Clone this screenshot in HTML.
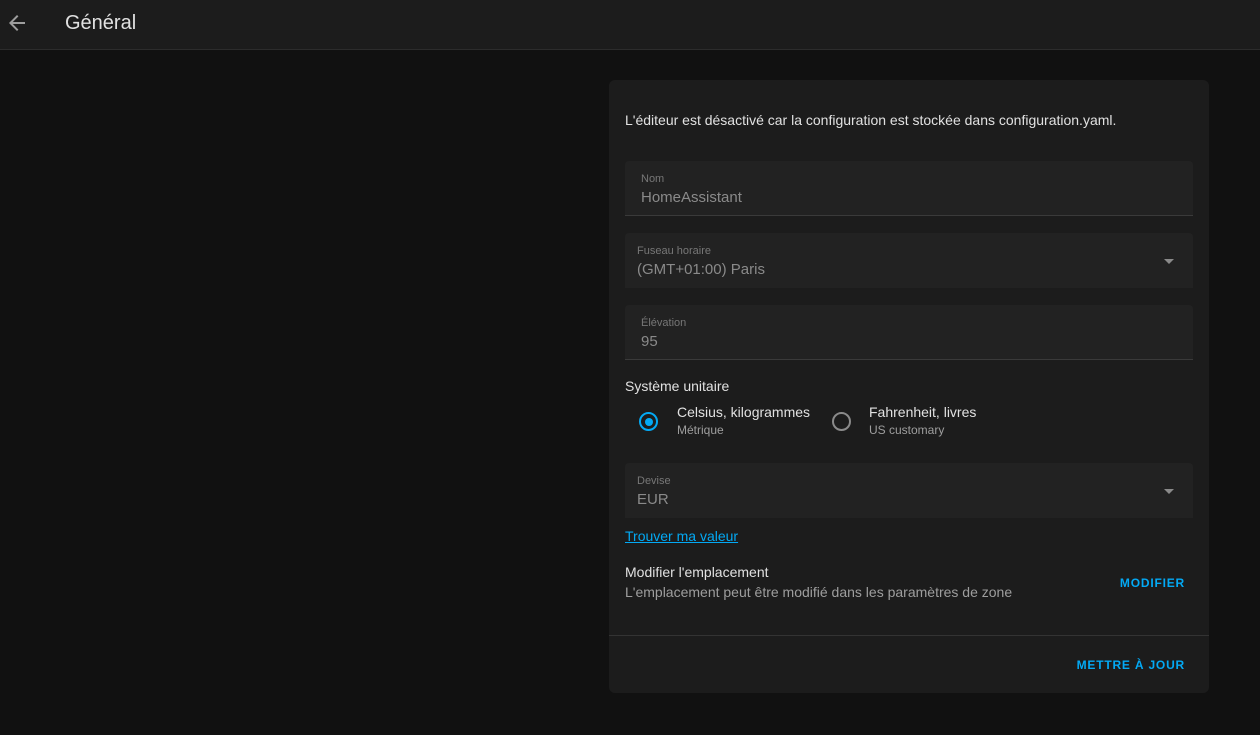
<!DOCTYPE html>
<html><head><meta charset="utf-8"><style>
*{box-sizing:border-box;margin:0;padding:0}
body{width:1260px;height:735px;background:#111111;font-family:"Liberation Sans",sans-serif;color:#e1e1e1;position:relative;overflow:hidden}
.hdr{position:absolute;left:0;top:0;width:1260px;height:50px;background:#1c1c1c;border-bottom:1px solid #2c2c2c}
.hdr .t{position:absolute;left:65px;top:12px;font-size:20px;color:#e1e1e1}
.card{position:absolute;left:609px;top:80px;width:600px;height:613px;background:#1c1c1c;border-radius:6px}
.a{position:absolute}
.fld{position:absolute;left:16px;width:568px;background:#222222;border-radius:4px 4px 0 0}
.lbl{position:absolute;font-size:11px;color:#777}
.val{position:absolute;font-size:15px;color:#8a8a8a}
.tri{position:absolute;right:19px;width:0;height:0;border-left:5px solid transparent;border-right:5px solid transparent;border-top:5px solid #8a8a8a}
.blue{color:#03a9f4}
</style></head><body>
<div class="hdr">
<svg style="position:absolute;left:5px;top:11px" width="24" height="24" viewBox="0 0 24 24"><path d="M20 11H7.83l5.59-5.59L12 4l-8 8 8 8 1.41-1.41L7.83 13H20v-2z" fill="#9e9e9e"/></svg>
<div class="t">Général</div>
</div>
<div class="card">
<div class="a" style="left:16px;top:32px;font-size:14px;color:#e1e1e1">L'éditeur est désactivé car la configuration est stockée dans configuration.yaml.</div>
<div class="fld" style="top:81px;height:55px;border-bottom:1px solid #3a3a3a">
 <div class="lbl" style="left:16px;top:12px">Nom</div><div class="val" style="left:16px;top:28px">HomeAssistant</div></div>
<div class="fld" style="top:153px;height:55px">
 <div class="lbl" style="left:12px;top:12px">Fuseau horaire</div><div class="val" style="left:12px;top:28px">(GMT+01:00) Paris</div><div class="tri" style="top:26px"></div></div>
<div class="fld" style="top:225px;height:55px;border-bottom:1px solid #3a3a3a">
 <div class="lbl" style="left:16px;top:12px">Élévation</div><div class="val" style="left:16px;top:28px">95</div></div>
<div class="a" style="left:16px;top:298px;font-size:14px">Système unitaire</div>
<div class="a" style="left:30px;top:332px;width:19px;height:19px;border:2px solid #03a9f4;border-radius:50%"><div style="position:absolute;left:3.5px;top:3.5px;width:8px;height:8px;border-radius:50%;background:#03a9f4"></div></div>
<div class="a" style="left:68px;top:324px;font-size:14px">Celsius, kilogrammes</div>
<div class="a" style="left:68px;top:343px;font-size:12px;color:#9e9e9e">Métrique</div>
<div class="a" style="left:223px;top:332px;width:19px;height:19px;border:2px solid #8a8a8a;border-radius:50%"></div>
<div class="a" style="left:260px;top:324px;font-size:14px">Fahrenheit, livres</div>
<div class="a" style="left:260px;top:343px;font-size:12px;color:#9e9e9e">US customary</div>
<div class="fld" style="top:383px;height:55px">
 <div class="lbl" style="left:12px;top:12px">Devise</div><div class="val" style="left:12px;top:28px">EUR</div><div class="tri" style="top:26px"></div></div>
<div class="a blue" style="left:16px;top:448px;font-size:14px;text-decoration:underline">Trouver ma valeur</div>
<div class="a" style="left:16px;top:484px;font-size:14px">Modifier l'emplacement</div>
<div class="a" style="left:16px;top:504px;font-size:14px;color:#9e9e9e">L'emplacement peut être modifié dans les paramètres de zone</div>
<div class="a blue" style="right:24px;top:496px;font-size:12px;font-weight:bold;letter-spacing:0.8px">MODIFIER</div>
<div class="a" style="left:0;top:555px;width:600px;height:1px;background:#333"></div>
<div class="a blue" style="right:24px;top:578px;font-size:12px;font-weight:bold;letter-spacing:0.8px">METTRE À JOUR</div>
</div>
</body></html>
